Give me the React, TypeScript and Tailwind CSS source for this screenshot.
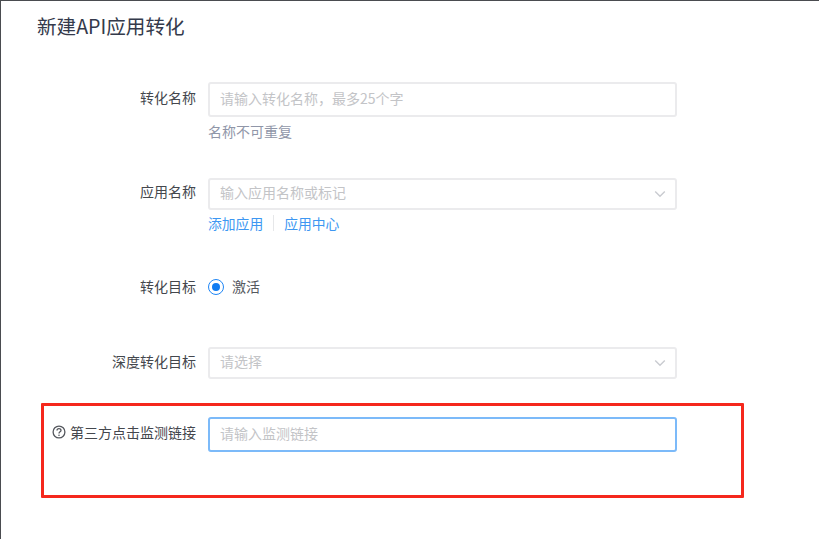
const font = { fontFamily: '"Noto Sans CJK SC", "Liberation Sans", sans-serif' };

function Chevron() {
  return (
    <svg width="12" height="8" viewBox="0 0 12 8" fill="none" className="shrink-0">
      <path d="M1.2 1.5 L6 6.2 L10.8 1.5" stroke="#c9cbd0" strokeWidth="1.4" />
    </svg>
  );
}

function Label({ children }: { children: React.ReactNode }) {
  return (
    <div className="w-[195px] shrink-0 flex items-center justify-end gap-[4px] text-[14px] leading-[20px] text-[#44474d]">
      {children}
    </div>
  );
}

function SelectBox({ text }: { text: string }) {
  return (
    <div className="h-[32px] w-[469px] flex items-center justify-between rounded-[3px] border-2 border-[#ebebed] pl-[10px] pr-[9px]">
      <span className="text-[14px] leading-[20px] -mt-[4px] text-[#c3c4c7]">{text}</span>
      <Chevron />
    </div>
  );
}

export default function App() {
  return (
    <div style={font} className="relative w-[819px] h-[539px] overflow-hidden bg-white border-t border-l border-[#4a4c50]">
      <h1 className="ml-[36px] mt-[12px] text-[19.6px] leading-[26px] font-normal text-[#343a4b]">新建API应用转化</h1>

      <div className="mt-[43px] flex items-start">
        <div className="pt-[5px]"><Label>转化名称</Label></div>
        <div className="ml-[12px]">
          <input
            readOnly
            placeholder="请输入转化名称，最多25个字"
            className="block h-[35px] w-[469px] rounded-[3px] border-2 border-[#ebebed] px-[10px] pb-[3px] text-[14px] outline-none placeholder:text-[#c3c4c7]"
          />
          <div className="mt-[5px] text-[14px] leading-[18px] text-[#9096a8]">名称不可重复</div>
        </div>
      </div>

      <div className="mt-[38px] flex items-start">
        <div className="pt-[3px]"><Label>应用名称</Label></div>
        <div className="ml-[12px]">
          <SelectBox text="输入应用名称或标记" />
          <div className="mt-[4px] flex items-center text-[13.8px] leading-[18px] text-[#3d97f2]">
            <span>添加应用</span>
            <span className="mx-[10px] h-[16px] w-px bg-[#e6e7e9]" />
            <span>应用中心</span>
          </div>
        </div>
      </div>

      <div className="mt-[45px] flex items-center h-[20px]">
        <div className="-mt-[2px]"><Label>转化目标</Label></div>
        <div className="ml-[12px] flex items-center">
          <span className="flex h-[16px] w-[16px] items-center justify-center rounded-full border border-[#1f86f5]">
            <span className="h-[8px] w-[8px] rounded-full bg-[#0f7bf2]" />
          </span>
          <span className="ml-[8px] -mt-[2px] text-[14px] text-[#55585e]">激活</span>
        </div>
      </div>

      <div className="mt-[50px] flex items-start">
        <div className="pt-[4px]"><Label>深度转化目标</Label></div>
        <div className="ml-[12px]">
          <SelectBox text="请选择" />
        </div>
      </div>

      <div className="mt-[38px] flex items-start">
        <div className="pt-[5px]">
          <Label>
            <svg width="14" height="14" viewBox="0 0 14 14" fill="none" className="shrink-0">
              <circle cx="7" cy="7" r="5.9" stroke="#55585e" strokeWidth="1.3" />
              <path d="M5 5.6 C5 3 9 3 9 5.5 C9 6.9 7 6.8 7 8.4" stroke="#55585e" strokeWidth="1.3" />
              <circle cx="7" cy="10.2" r="0.8" fill="#55585e" />
            </svg>
            <span>第三方点击监测链接</span>
          </Label>
        </div>
        <div className="ml-[12px]">
          <input
            readOnly
            placeholder="请输入监测链接"
            className="block h-[35px] w-[469px] rounded-[3px] border-2 border-[#7cbaf9] px-[10px] pb-[3px] text-[14px] outline-none placeholder:text-[#c3c4c7]"
          />
        </div>
      </div>

      <div className="absolute left-[40px] top-[402px] h-[95px] w-[703px] rounded-[1px] border-[3px] border-[#f5281c]" />
    </div>
  );
}
